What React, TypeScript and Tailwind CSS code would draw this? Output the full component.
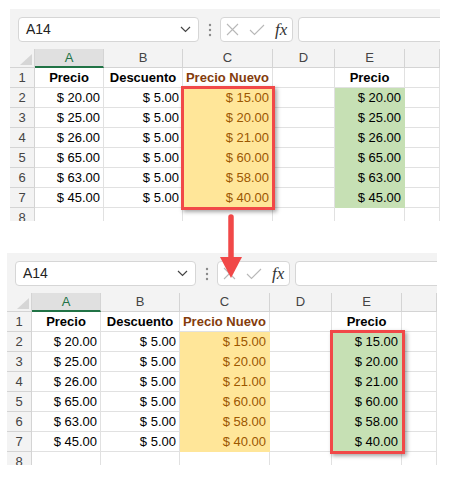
import React from 'react';

type Col = 'A' | 'B' | 'C' | 'D' | 'E' | 'F';

const COLS: Col[] = ['A', 'B', 'C', 'D', 'E', 'F'];

const PRECIO = ['$ 20.00', '$ 25.00', '$ 26.00', '$ 65.00', '$ 63.00', '$ 45.00'];
const NUEVO = ['$ 15.00', '$ 20.00', '$ 21.00', '$ 60.00', '$ 58.00', '$ 40.00'];

const font = { fontFamily: '"Liberation Sans", Arial, sans-serif' };

const NameBox = () => (
  <div className="w-[181px] h-[25px] shrink-0 bg-white border border-[#d6d6d6] rounded-[4px] flex items-center justify-between pl-[7px] pr-[7px]">
    <span className="text-[14px] text-[#222]">A14</span>
    <svg width="11" height="7" viewBox="0 0 11 7">
      <path d="M1 1l4.5 4.5L10 1" fill="none" stroke="#444" strokeWidth="1.2" />
    </svg>
  </div>
);

const Toolbar = () => (
  <div className="h-[40px] flex items-start pt-[8px] pl-[8px]">
    <NameBox />
    <svg width="4" height="14" viewBox="0 0 4 14" className="ml-[9px] mt-[6px] shrink-0">
      <circle cx="2" cy="2" r="1.2" fill="#8a8a8a" />
      <circle cx="2" cy="7" r="1.2" fill="#8a8a8a" />
      <circle cx="2" cy="12" r="1.2" fill="#8a8a8a" />
    </svg>
    <div className="ml-[8px] w-[73px] h-[25px] bg-white border border-[#d6d6d6] rounded-[4px] flex items-center pl-[5px] shrink-0">
      <svg width="13" height="13" viewBox="0 0 13 13">
        <path d="M1 1l11 11M12 1L1 12" stroke="#b8b8b8" strokeWidth="1.1" />
      </svg>
      <svg width="16" height="12" viewBox="0 0 16 12" className="ml-[10px]">
        <path d="M1 6l4.5 4.5L15 1" fill="none" stroke="#b8b8b8" strokeWidth="1.1" />
      </svg>
      <span
        className="ml-[10px] text-[17px] italic text-[#333] leading-none"
        style={{ fontFamily: '"Liberation Serif", "Times New Roman", serif' }}
      >
        fx
      </span>
    </div>
    <div className="ml-[5px] w-[200px] h-[25px] bg-white border border-[#d6d6d6] rounded-[4px] shrink-0" />
  </div>
);

const Corner = () => (
  <div className="bg-[#f3f3f3] border-r border-b border-[#d4d4d4] flex items-end justify-end pr-[2px] pb-[2px]">
    <svg width="12" height="11" viewBox="0 0 12 11">
      <polygon points="12,0 12,11 0,11" fill="#d6d6d6" />
    </svg>
  </div>
);

const cellText = (row: number, col: Col, eValues: string[]) => {
  if (row === 1) {
    if (col === 'A' || col === 'E') return 'Precio';
    if (col === 'B') return 'Descuento';
    if (col === 'C') return 'Precio Nuevo';
    return '';
  }
  if (row >= 2 && row <= 7) {
    const i = row - 2;
    if (col === 'A') return PRECIO[i];
    if (col === 'B') return '$ 5.00';
    if (col === 'C') return NUEVO[i];
    if (col === 'E') return eValues[i];
  }
  return '';
};

const Cell = ({ row, col, eValues }: { row: number; col: Col; eValues: string[] }) => {
  const text = cellText(row, col, eValues);
  const data = row >= 2 && row <= 7;
  if (row === 1) {
    return (
      <div
        className={`border-r border-b border-[#e1e1e1] flex items-center justify-center text-[13px] font-bold ${
          col === 'C' ? 'text-[#843c0c]' : 'text-black'
        }`}
      >
        {text}
      </div>
    );
  }
  if (data && col === 'C') {
    return (
      <div className="bg-[#ffe699] border-r border-b border-[#ffe699] flex items-center justify-end pr-[3px] text-[13px] text-[#9c5700]">
        {text}
      </div>
    );
  }
  if (data && col === 'E') {
    return (
      <div className="bg-[#c6e0b4] border-r border-b border-[#c6e0b4] flex items-center justify-end pr-[3px] text-[13px] text-black">
        {text}
      </div>
    );
  }
  return (
    <div className="border-r border-b border-[#e1e1e1] flex items-center justify-end pr-[3px] text-[13px] text-black">
      {text}
    </div>
  );
};

const Sheet = ({ eValues, highlight }: { eValues: string[]; highlight: 'C' | 'E' }) => (
  <div className="w-[430px] h-[212px] overflow-hidden bg-[#f3f3f3]" style={font}>
    <Toolbar />
    <div className="relative bg-white grid grid-cols-[25px_69px_79px_90px_62px_70px_35px] grid-rows-[19px_repeat(8,20px)]">
      <Corner />
      {COLS.map((c) =>
        c === 'A' ? (
          <div
            key={c}
            className="bg-[#e0e0e0] border-r border-b-2 border-r-[#d4d4d4] border-b-[#217346] flex items-center justify-center text-[13px] text-[#217346]"
          >
            {c}
          </div>
        ) : (
          <div
            key={c}
            className="bg-[#f3f3f3] border-r border-b border-[#d4d4d4] flex items-center justify-center text-[13px] text-[#444]"
          >
            {c === 'F' ? '' : c}
          </div>
        )
      )}
      {[1, 2, 3, 4, 5, 6, 7, 8].map((r) => (
        <React.Fragment key={r}>
          <div className="bg-[#f3f3f3] border-r border-b border-[#d4d4d4] flex items-center justify-center text-[13px] text-[#444]">
            {r}
          </div>
          {COLS.map((c) => (
            <Cell key={c} row={r} col={c} eValues={eValues} />
          ))}
        </React.Fragment>
      ))}
      {highlight === 'C' ? (
        <div className="absolute left-[171px] top-[37px] w-[94px] h-[124px] border-[3px] border-[#f14848] shadow-[2px_2px_4px_rgba(0,0,0,0.35)]" />
      ) : (
        <div className="absolute left-[323px] top-[37px] w-[75px] h-[124px] border-[3px] border-[#f14848] shadow-[2px_2px_4px_rgba(0,0,0,0.35)]" />
      )}
    </div>
  </div>
);

const Arrow = () => (
  <svg
    width="26"
    height="68"
    viewBox="0 0 26 68"
    className="absolute left-[218px] top-[212px]"
  >
    <line x1="13" y1="5" x2="13" y2="48" stroke="#f14848" strokeWidth="5.5" strokeLinecap="round" />
    <polygon points="2,45 24,45 13,66" fill="#f14848" />
  </svg>
);

export default function App() {
  return (
    <div className="relative w-[460px] h-[491px] bg-white">
      <div className="pt-[9px] pl-[10px]">
        <Sheet eValues={PRECIO} highlight="C" />
      </div>
      <div className="pt-[32px] pl-[7px]">
        <Sheet eValues={NUEVO} highlight="E" />
      </div>
      <Arrow />
    </div>
  );
}
